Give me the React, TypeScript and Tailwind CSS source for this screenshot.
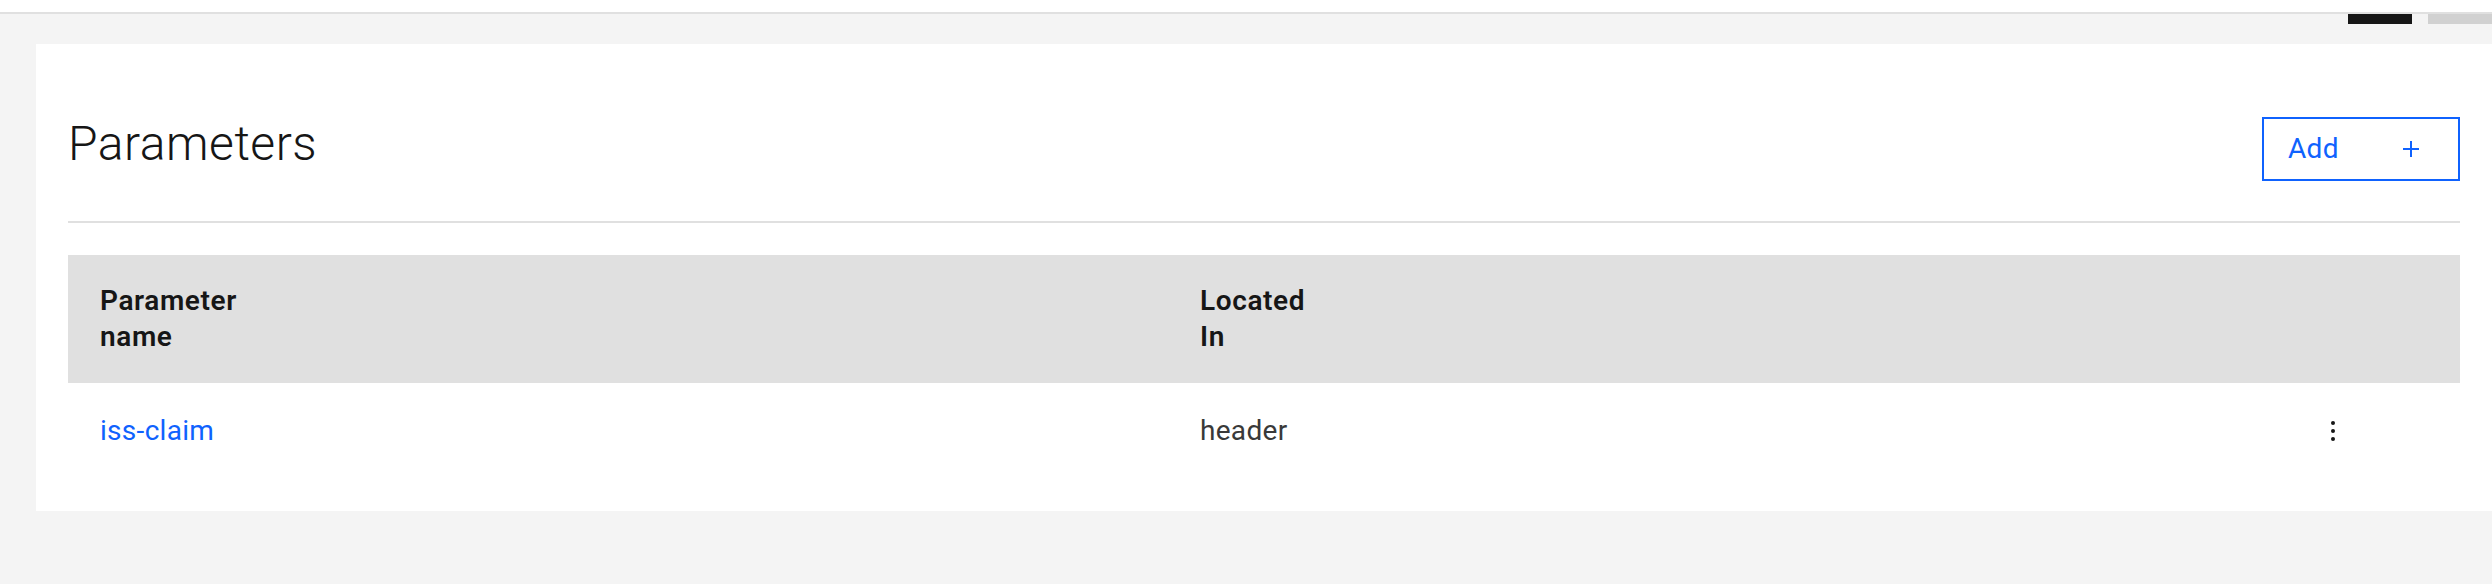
import React from "react";

interface Param {
  name: string;
  location: string;
}

const params: Param[] = [{ name: "iss-claim", location: "header" }];

const KebabIcon = () => (
  <svg width="4" height="20" viewBox="0 0 4 20" fill="#161616">
    <circle cx="2" cy="2" r="2" />
    <circle cx="2" cy="10" r="2" />
    <circle cx="2" cy="18" r="2" />
  </svg>
);

const PlusIcon = () => (
  <svg width="16" height="16" viewBox="0 0 16 16" fill="none" stroke="#0f62fe" strokeWidth={2}>
    <path d="M8 0v16M0 8h16" />
  </svg>
);

export default function App() {
  return (
    <div className="min-h-[584px] w-full overflow-hidden bg-[#f4f4f4] font-['Roboto','Liberation_Sans',sans-serif] text-[#161616]">
      {/* top strip */}
      <div className="h-[12px] bg-white" />
      <div className="h-[2px] bg-[#e0e0e0]" />
      <div className="flex h-[30px] items-start justify-end gap-4">
        <div className="h-[10px] w-[64px] bg-[#161616]" />
        <div className="h-[10px] w-[64px] bg-[#d1d1d1]" />
      </div>

      {/* card */}
      <div className="ml-[36px] bg-white px-8 pt-8 pb-8">
        <div className="flex h-[145px] items-center justify-between">
          <h2 className="pb-[9px] text-[48px] font-light tracking-[0.5px]">Parameters</h2>
          <button className="flex h-[64px] w-[198px] items-center justify-between border-2 border-[#0f62fe] pl-[24px] pr-[39px] text-[28px] tracking-[0.3px] text-[#0f62fe]">
            <span>Add</span>
            <PlusIcon />
          </button>
        </div>
        <div className="h-[2px] bg-[#e0e0e0]" />

        <div className="mt-8">
          <div className="grid h-[128px] grid-cols-[1100px_1fr_254px] items-center bg-[#e0e0e0] text-[28px] leading-[36px] font-semibold tracking-[0.6px]">
            <div className="pl-8">
              Parameter
              <br />
              name
            </div>
            <div className="pl-8">
              Located
              <br />
              In
            </div>
            <div />
          </div>
          {params.map((p) => (
            <div
              key={p.name}
              className="grid h-[96px] grid-cols-[1100px_1fr_254px] items-center text-[28px] leading-[36px] tracking-[0.3px]"
            >
              <div className="pl-8">
                <a className="text-[#0f62fe]">{p.name}</a>
              </div>
              <div className="pl-8 text-[#393939]">{p.location}</div>
              <div className="flex justify-center">
                <button className="flex h-[40px] w-[40px] items-center justify-center">
                  <KebabIcon />
                </button>
              </div>
            </div>
          ))}
        </div>
      </div>
    </div>
  );
}
